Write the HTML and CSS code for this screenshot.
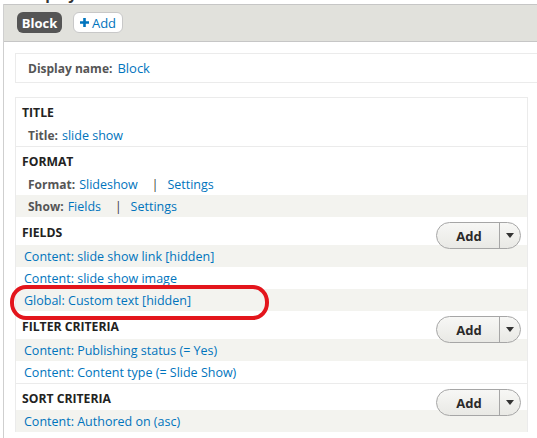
FILE: index.html
```html
<!DOCTYPE html>
<html>
<head>
<meta charset="utf-8">
<link rel="stylesheet" href="styles.css">
</head>
<body>
<div class="peek"><span>Displays</span></div>
<div class="wrap">
  <div class="tabs">
    <span class="tab active">Block</span>
    <span class="tab add"><svg class="plus" width="9" height="9" viewBox="0 0 9 9"><path d="M3.2 0h2.6v3.2H9v2.6H5.8V9H3.2V5.8H0V3.2h3.2z" fill="#0074bd"/></svg>Add</span>
  </div>
  <div class="content">
    <div class="dname"><b>Display name:</b> <a>Block</a></div>
    <div class="box">
      <div class="head">TITLE</div>
      <div class="row lab"><b>Title:</b> <a>slide show</a></div>
      <div class="sep"></div>
      <div class="head">FORMAT</div>
      <div class="row lab"><b>Format:</b> <a>Slideshow</a><span class="bar">|</span><a>Settings</a></div>
      <div class="row lab alt"><b>Show:</b> <a>Fields</a><span class="bar">|</span><a>Settings</a></div>
      <div class="head tall">FIELDS<span class="drop"><span class="dmain">Add</span><span class="darrow"><svg width="8" height="5" viewBox="0 0 8 5"><path d="M0 0h8L4 5z" fill="#333"/></svg></span></span></div>
      <div class="row alt"><a>Content: slide show link [hidden]</a></div>
      <div class="row"><a>Content: slide show image</a></div>
      <div class="row alt circled"><a>Global: Custom text [hidden]</a><span class="ring"></span></div>
      <div class="head tall">FILTER CRITERIA<span class="drop"><span class="dmain">Add</span><span class="darrow"><svg width="8" height="5" viewBox="0 0 8 5"><path d="M0 0h8L4 5z" fill="#333"/></svg></span></span></div>
      <div class="row alt"><a>Content: Publishing status (= Yes)</a></div>
      <div class="row"><a>Content: Content type (= Slide Show)</a></div>
      <div class="sep"></div>
      <div class="head">SORT CRITERIA<span class="drop"><span class="dmain">Add</span><span class="darrow"><svg width="8" height="5" viewBox="0 0 8 5"><path d="M0 0h8L4 5z" fill="#333"/></svg></span></span></div>
      <div class="row alt"><a>Content: Authored on (asc)</a></div>
    </div>
  </div>
</div>
</body>
</html>
```
FILE: styles.css
```css
html, body {
  margin: 0;
  padding: 0;
  background: #fff;
  overflow: hidden;
}
body {
  font-family: "Open Sans", "DejaVu Sans", sans-serif;
  font-size: 12px;
  color: #333;
}
a {
  color: #0074bd;
  text-decoration: none;
  font-size: 12.5px;
}
.peek {
  height: 4px;
  overflow: hidden;
  padding-left: 22px;
}
.peek span {
  display: block;
  margin-top: -14px;
  font-weight: bold;
  font-size: 15px;
  line-height: 16px;
  color: #333;
}
.wrap {
  margin-left: 3px;
  border-left: 1px solid #cfcfcf;
  height: 440px;
}
.tabs {
  background: #e1e1dc;
  border-top: 1px solid #c6c6c6;
  border-bottom: 1px solid #c6c6c6;
  height: 36px;
  box-sizing: content-box;
  padding: 0 13px;
  display: flex;
  align-items: flex-start;
  gap: 11px;
}
.tab {
  margin-top: 7px;
  height: 21px;
  box-sizing: border-box;
  display: flex;
  align-items: center;
  font-size: 13px;
  border-radius: 6px;
}
.tab.active {
  background: #555;
  color: #fff;
  font-weight: bold;
  width: 45px;
  justify-content: center;
}
.tab.add {
  background: #fff;
  border: 1px solid #c8c8c8;
  color: #0074bd;
  width: 50px;
  justify-content: center;
  gap: 3px;
}
.plus {
  display: block;
}
.content {
  padding: 11px 9px 0 11px;
}
.dname {
  height: 30px;
  box-sizing: border-box;
  border: 1px solid #ebebeb;
  border-right: none;
  margin-right: -20px;
  display: flex;
  align-items: center;
  padding-left: 12px;
  font-size: 12px;
  gap: 5px;
}
.dname a {
  font-size: 13px;
}
.dname b, .lab b {
  color: #555;
}
.box {
  margin-top: 14px;
  border: 1px solid #ebebeb;
  border-bottom: none;
}
.head {
  height: 26px;
  box-sizing: border-box;
  display: flex;
  align-items: center;
  padding: 2px 6px 0 6px;
  font-weight: bold;
  font-size: 12.2px;
  color: #222;
}
.head.tall {
  height: 28px;
}
.sep {
  height: 1px;
  background: #ebebeb;
}
.row {
  height: 22px;
  display: flex;
  align-items: center;
  padding-left: 8px;
  position: relative;
}
.row.lab {
  padding-left: 12px;
  gap: 4px;
}
.row.alt {
  background: #f3f3ef;
}
.bar {
  margin: 0 5px 0 10px;
  color: #333;
}
.drop {
  margin-left: auto;
  align-self: flex-start;
  margin-top: 3px;
  height: 27px;
  width: 85px;
  box-sizing: border-box;
  border: 1px solid #a6a6a6;
  border-radius: 14px;
  background: linear-gradient(#f7f7f5, #e9e9e5);
  display: flex;
  position: relative;
  z-index: 1;
}
.dmain {
  width: 60px;
  border-right: 1px solid #a6a6a6;
  display: flex;
  align-items: center;
  justify-content: center;
  font-weight: bold;
  font-size: 13px;
  color: #2a2a2a;
  padding-left: 2px;
}
.darrow {
  flex: 1;
  display: flex;
  align-items: center;
  justify-content: center;
}
.ring {
  position: absolute;
  left: -6px;
  top: -4px;
  width: 259px;
  height: 35px;
  box-sizing: border-box;
  border: 4px solid #e3151c;
  border-radius: 16px / 17px;
  z-index: 2;
}
```
